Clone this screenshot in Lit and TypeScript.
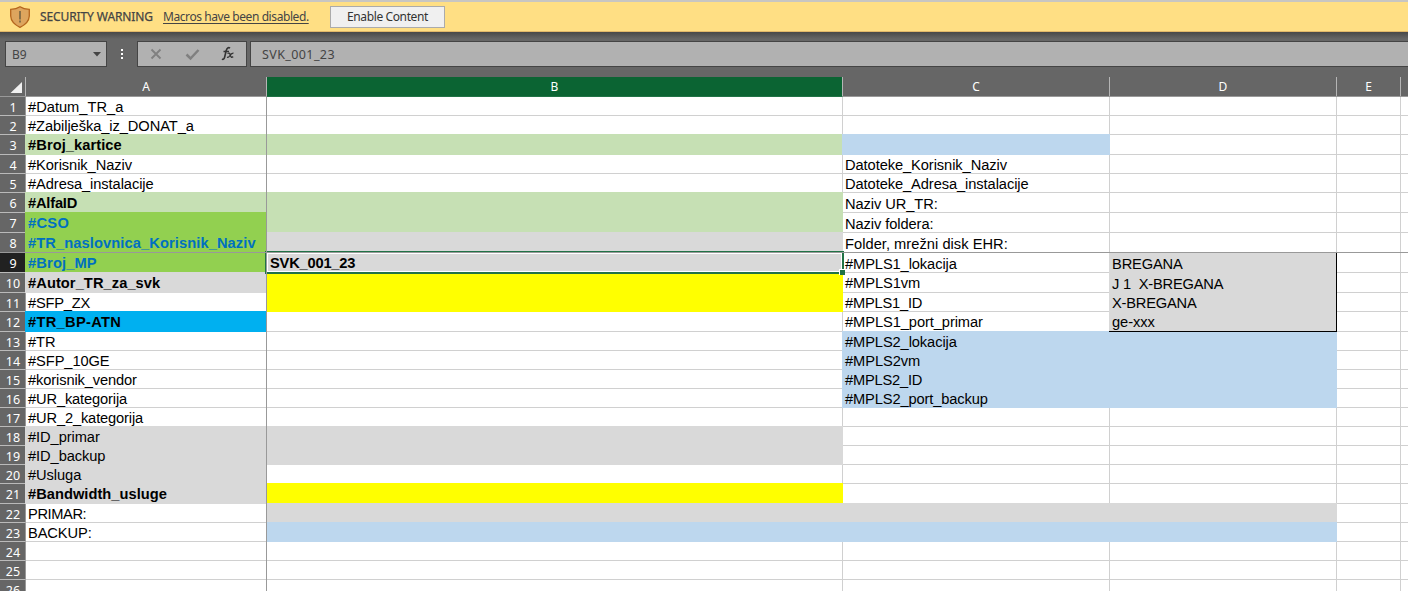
import { LitElement, html, css, nothing } from "lit";
import { customElement } from "lit/decorators.js";
import { classMap } from "lit/directives/class-map.js";

interface Cell { t?: string; f?: string; b?: boolean; ink?: boolean; low?: boolean; ls?: number; }
interface Row { h: number; cells: Record<string, Cell>; }

const COLS = ["A", "B", "C", "D", "E", "F"];
const g = (t: string, ls?: number): Cell => ({ t, ls });

const ROWS: Row[] = [
  { h: 19, cells: { A: g("#Datum_TR_a", 0) } },
  { h: 19, cells: { A: g("#Zabilješka_iz_DONAT_a") } },
  { h: 20, cells: { A: { t: "#Broj_kartice", b: true, f: "pale" }, B: { f: "pale" }, C: { f: "blue" } } },
  { h: 19, cells: { A: g("#Korisnik_Naziv"), C: g("Datoteke_Korisnik_Naziv") } },
  { h: 19, cells: { A: g("#Adresa_instalacije"), C: g("Datoteke_Adresa_instalacije") } },
  { h: 20, cells: { A: { t: "#AlfaID", b: true, f: "pale", ls: -0.2 }, B: { f: "pale" }, C: { t: "Naziv UR_TR:", low: true } } },
  { h: 20, cells: { A: { t: "#CSO", b: true, ink: true, f: "green", ls: 0.3 }, B: { f: "pale" }, C: { t: "Naziv foldera:", low: true } } },
  { h: 20, cells: { A: { t: "#TR_naslovnica_Korisnik_Naziv", b: true, ink: true, f: "green", ls: 0.1 }, B: { f: "grey" }, C: { t: "Folder, mrežni disk EHR:", low: true, ls: 0.03 } } },
  { h: 20, cells: { A: { t: "#Broj_MP", b: true, ink: true, f: "green", ls: 0.15 }, B: { t: "SVK_001_23", b: true, f: "grey", ls: -0.2 }, C: { t: "#MPLS1_lokacija", low: true, ls: -0.1 }, D: { t: "BREGANA", f: "grey", low: true, ls: -0.15 } } },
  { h: 20, cells: { A: { t: "#Autor_TR_za_svk", b: true, f: "grey" }, B: { f: "yellow" }, C: g("#MPLS1vm"), D: { t: "J 1  X-BREGANA", f: "grey", low: true, ls: -0.2 } } },
  { h: 19, cells: { A: g("#SFP_ZX", -0.2), B: { f: "yellow" }, C: g("#MPLS1_ID", -0.2), D: { t: "X-BREGANA", f: "grey", ls: -0.2 } } },
  { h: 20, cells: { A: { t: "#TR_BP-ATN", b: true, f: "cyan", ls: 0.3 }, C: g("#MPLS1_port_primar"), D: { t: "ge-xxx", f: "grey" } } },
  { h: 19, cells: { A: g("#TR"), C: { t: "#MPLS2_lokacija", f: "blue", ls: -0.1 }, D: { f: "blue" } } },
  { h: 19, cells: { A: g("#SFP_10GE"), C: { t: "#MPLS2vm", f: "blue" }, D: { f: "blue" } } },
  { h: 19, cells: { A: g("#korisnik_vendor", -0.12), C: { t: "#MPLS2_ID", f: "blue", ls: -0.2 }, D: { f: "blue" } } },
  { h: 19, cells: { A: g("#UR_kategorija", -0.14), C: { t: "#MPLS2_port_backup", f: "blue", ls: -0.13 }, D: { f: "blue" } } },
  { h: 19, cells: { A: g("#UR_2_kategorija", -0.14) } },
  { h: 19, cells: { A: { t: "#ID_primar", f: "grey" }, B: { f: "grey" } } },
  { h: 19, cells: { A: { t: "#ID_backup", f: "grey" }, B: { f: "grey" } } },
  { h: 19, cells: { A: { t: "#Usluga", f: "grey" } } },
  { h: 20, cells: { A: { t: "#Bandwidth_usluge", b: true, f: "grey", ls: 0.03 }, B: { f: "yellow" } } },
  { h: 19, cells: { A: g("PRIMAR:", -0.4), B: { f: "grey" }, C: { f: "grey" }, D: { f: "grey" } } },
  { h: 19, cells: { A: g("BACKUP:", -0.1), B: { f: "blue" }, C: { f: "blue" }, D: { f: "blue" } } },
  { h: 19, cells: {} },
  { h: 19, cells: {} },
  { h: 19, cells: {} },
];

@customElement("app-root")
export class AppRoot extends LitElement {
  static styles = css`
    :host { display: flex; flex-direction: column; height: 591px; overflow: hidden; background: #666; font: 12px/16px "Noto Sans", sans-serif; color: #444; }
    * { box-sizing: border-box; }
    .warn { flex: none; height: 32px; display: flex; align-items: center; background: #ffdf84; border-top: 2px solid #c8c6c2; border-bottom: 1px solid #e2b869; padding-top: 1px; }
    .shield { width: 20px; height: 22px; margin: 0 10px 0 10px; flex: none; }
    .title { width: 123px; white-space: nowrap; letter-spacing: -0.1px; -webkit-text-stroke: 0.25px #444; }
    .link { text-decoration: underline; text-underline-offset: 2px; width: 167px; white-space: nowrap; letter-spacing: -0.42px; }
    .enable { width: 115px; height: 22px; margin-top: -1px; background: #f0f0f0; border: 1px solid #ababab; font: inherit; color: #333; padding: 1px 0 0; letter-spacing: -0.38px; }
    .bar { flex: none; height: 45px; padding-top: 9px; display: flex; background: linear-gradient(#484848, #666 7px); }
    .box { height: 26px; background: #b1b1b1; border: 1px solid #444; display: flex; align-items: center; }
    .name { width: 102px; margin-left: 5px; padding: 0 5px 0 6px; justify-content: space-between; }
    .ref { padding-top: 2px; }
    .dots { width: 30px; height: 26px; }
    .tools { width: 110px; }
    .formula { flex: 1; margin-left: 3px; padding: 2px 0 0 11px; border-right: 0; font-size: 12.5px; letter-spacing: 0.4px; }
    .head, .row { display: grid; grid-template-columns: 26px 241px 576px 267px 227px 64px 1fr; grid-template-rows: minmax(0, 1fr); flex: none; }
    .head { height: 20px; color: #fff; border-bottom: 1px solid #999; }
    .col { border-right: 1px solid #b5b5b5; text-align: center; line-height: 19px; height: 19px; }
    .col.sel { background: #0b6433; border-bottom: 1px solid #217346; height: 20px; }
    .col.first { text-align: right; display: flex; }
    .col:last-child, .cell:last-child { border-right: 0; }
    .num { background: #666; color: #fff; border-right: 1px solid #999; border-bottom: 1px solid #bababa; text-align: center; line-height: 21px; font-size: 12.5px; padding-left: 1px; min-height: 0; overflow: hidden; }
    .num.sel { background: #212121; border-right-color: #217346; }
    .grid { background: #fff; position: relative; flex: none; }
    .cell { border-right: 1px solid #d0d0d0; border-bottom: 1px solid #d0d0d0; padding: 1px 0 0 2px; min-height: 0; font: 14.67px/19px "Liberation Sans", sans-serif; letter-spacing: -0.08px; color: #000; white-space: pre; }
    .fill { border: 0; margin: -1px 0 0 -1px; padding: 2px 0 0 3px; }
    .low { padding-top: 2px; }
    .fill.low { padding-top: 3px; }
    .b { font-weight: bold; letter-spacing: 0.07px; }
    .active { padding-left: 4px; }
    .ink { color: #0070c0; }
    .pale { background: #c6e0b4; }
    .blue { background: #bdd7ee; }
    .green { background: #92d050; }
    .grey { background: #d9d9d9; }
    .yellow { background: #ff0; }
    .cyan { background: #00b0f0; }
    .edge { border-right: 1px solid #000; }
    .under { border-bottom: 1px solid #000; z-index: 1; }
    .freeze-x { position: absolute; top: 0; bottom: 0; left: 266px; width: 1px; background: #999; }
    .freeze-y { position: absolute; left: 0; right: 0; top: 155px; height: 1px; background: #999; }
    .cursor { position: absolute; left: 265px; top: 154px; width: 579px; height: 23px; border: 2px solid #217346; }
    .inner { position: absolute; inset: 0; border: 1px solid #fff; }
    .handle { position: absolute; right: -3px; bottom: -3px; width: 6px; height: 6px; background: #217346; border: solid #fff; border-width: 1px 0 0 1px; }
  `;

  private cell(col: string, c: Cell | undefined, n: number) {
    const cls = {
      cell: true, fill: !!c?.f, b: !!c?.b, ink: !!c?.ink, low: !!c?.low,
      [c?.f ?? "plain"]: true,
      active: col === "B" && n === 9,
      edge: col === "D" && n >= 9 && n <= 12,
      under: col === "D" && n === 12,
    };
    return html`<div class=${classMap(cls)} style=${c?.ls === undefined ? nothing : `letter-spacing:${c.ls}px`}>${c?.t ?? nothing}</div>`;
  }

  render() {
    return html`
      <div class="warn">
        <svg class="shield" viewBox="0 0 20 22"><path d="M10 .8Q13.500 3.200 19.300 3.400V10Q19 17 10 21.300Q1 17 .7 10V3.400Q6.500 3.200 10 .8Z" fill="#dda55e" stroke="#b5651d" stroke-width="1.300"/><path d="M10 5v8.500M10 14.500v2" stroke="#7f6a45" stroke-width="1.800"/></svg>
        <span class="title">SECURITY WARNING</span>
        <span class="link">Macros have been disabled.</span>
        <button class="enable">Enable Content</button>
      </div>
      <div class="bar">
        <div class="box name"><span class="ref">B9</span><svg width="8" height="5"><path d="M0 0h8L4 4.500z" fill="#444"/></svg></div>
        <svg class="dots" viewBox="0 0 30 26"><path d="M14 8h2v2h-2zM14 12h2v2h-2zM14 16h2v2h-2z" fill="#fff"/></svg>
        <div class="box tools"><svg width="108" height="24" viewBox="0 0 108 24" fill="none">
          <path d="M13.500 7.500l9 9M22.500 7.500l-9 9" stroke="#808080" stroke-width="1.900"/>
          <path d="M48.500 12.500l4 4 8-8.500" stroke="#808080" stroke-width="2.500"/>
          <path d="M92 6.200C90.500 5 88.800 6 88.300 8.300L86.600 15.200C86.100 17.300 85 17.700 84 17M85.500 9.500h5.500" stroke="#333" stroke-width="1.600"/>
          <path d="M89.500 11.500C91.500 10.500 91.800 11.500 92.300 13.200C92.800 15.300 93.500 15.800 95.200 14.600M95.500 11.200C93.800 11 92.500 12.500 91.600 14C90.900 15.200 90.200 15.500 89 15.200" stroke="#333" stroke-width="1.300"/>
        </svg></div>
        <div class="box formula">SVK_001_23</div>
      </div>
      <div class="head">
        <div class="col first"><svg width="25" height="19"><path d="M22 5v11H10.500z" fill="#f0f0f0"/></svg></div>
        ${COLS.map((c) => html`<div class=${classMap({ col: true, sel: c === "B" })}>${c === "F" ? nothing : c}</div>`)}
      </div>
      <div class="grid">
        ${ROWS.map((r, i) => html`<div class="row" style="height:${r.h}px">
          <div class=${classMap({ num: true, sel: i === 8 })}>${i + 1}</div>
          ${COLS.map((c) => this.cell(c, r.cells[c], i + 1))}
        </div>`)}
        <div class="cursor"><div class="inner"></div><div class="handle"></div></div>
        <div class="freeze-x"></div>
        <div class="freeze-y"></div>
      </div>`;
  }
}
